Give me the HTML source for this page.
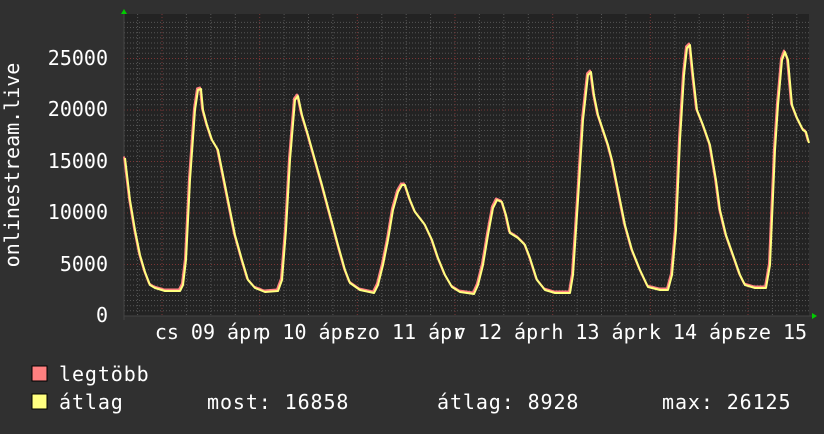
<!DOCTYPE html>
<html><head><meta charset="utf-8"><style>
body{margin:0;width:824px;height:430px;background:#303030;overflow:hidden;font-family:"DejaVu Sans Mono","Liberation Mono",monospace;}
svg text{font-family:"DejaVu Sans Mono","Liberation Mono",monospace;fill:#fff;font-size:20px;}
.lg{letter-spacing:0.9px}
</style></head><body>
<svg width="824" height="430" viewBox="0 0 824 430" xmlns="http://www.w3.org/2000/svg">
<defs><clipPath id="c"><rect x="0" y="320" width="811" height="30"/></clipPath></defs>
<rect x="0" y="0" width="824" height="430" fill="#303030"/>
<rect x="124" y="14" width="685" height="302" fill="#232323"/>
<g stroke="#555" stroke-width="1" stroke-dasharray="1,2">
<line x1="124" y1="310.8" x2="809" y2="310.8"/><line x1="124" y1="305.7" x2="809" y2="305.7"/><line x1="124" y1="300.5" x2="809" y2="300.5"/><line x1="124" y1="295.4" x2="809" y2="295.4"/><line x1="124" y1="290.2" x2="809" y2="290.2"/><line x1="124" y1="285.1" x2="809" y2="285.1"/><line x1="124" y1="279.9" x2="809" y2="279.9"/><line x1="124" y1="274.8" x2="809" y2="274.8"/><line x1="124" y1="269.6" x2="809" y2="269.6"/>
<line x1="124" y1="259.3" x2="809" y2="259.3"/><line x1="124" y1="254.1" x2="809" y2="254.1"/><line x1="124" y1="249" x2="809" y2="249"/><line x1="124" y1="243.8" x2="809" y2="243.8"/><line x1="124" y1="238.7" x2="809" y2="238.7"/><line x1="124" y1="233.5" x2="809" y2="233.5"/><line x1="124" y1="228.4" x2="809" y2="228.4"/><line x1="124" y1="223.2" x2="809" y2="223.2"/><line x1="124" y1="218.1" x2="809" y2="218.1"/>
<line x1="124" y1="207.8" x2="809" y2="207.8"/><line x1="124" y1="202.6" x2="809" y2="202.6"/><line x1="124" y1="197.5" x2="809" y2="197.5"/><line x1="124" y1="192.3" x2="809" y2="192.3"/><line x1="124" y1="187.2" x2="809" y2="187.2"/><line x1="124" y1="182" x2="809" y2="182"/><line x1="124" y1="176.9" x2="809" y2="176.9"/><line x1="124" y1="171.7" x2="809" y2="171.7"/><line x1="124" y1="166.6" x2="809" y2="166.6"/>
<line x1="124" y1="156.3" x2="809" y2="156.3"/><line x1="124" y1="151.1" x2="809" y2="151.1"/><line x1="124" y1="146" x2="809" y2="146"/><line x1="124" y1="140.8" x2="809" y2="140.8"/><line x1="124" y1="135.7" x2="809" y2="135.7"/><line x1="124" y1="130.5" x2="809" y2="130.5"/><line x1="124" y1="125.4" x2="809" y2="125.4"/><line x1="124" y1="120.2" x2="809" y2="120.2"/><line x1="124" y1="115.1" x2="809" y2="115.1"/>
<line x1="124" y1="104.8" x2="809" y2="104.8"/><line x1="124" y1="99.6" x2="809" y2="99.6"/><line x1="124" y1="94.5" x2="809" y2="94.5"/><line x1="124" y1="89.3" x2="809" y2="89.3"/><line x1="124" y1="84.2" x2="809" y2="84.2"/><line x1="124" y1="79" x2="809" y2="79"/><line x1="124" y1="73.9" x2="809" y2="73.9"/><line x1="124" y1="68.7" x2="809" y2="68.7"/><line x1="124" y1="63.6" x2="809" y2="63.6"/>
<line x1="124" y1="53.3" x2="809" y2="53.3"/><line x1="124" y1="48.1" x2="809" y2="48.1"/><line x1="124" y1="43" x2="809" y2="43"/><line x1="124" y1="37.8" x2="809" y2="37.8"/><line x1="124" y1="32.7" x2="809" y2="32.7"/><line x1="124" y1="27.5" x2="809" y2="27.5"/><line x1="124" y1="22.4" x2="809" y2="22.4"/>
<line x1="137.6" y1="14" x2="137.6" y2="316"/><line x1="186.4" y1="14" x2="186.4" y2="316"/><line x1="210.8" y1="14" x2="210.8" y2="316"/><line x1="235.3" y1="14" x2="235.3" y2="316"/><line x1="284.1" y1="14" x2="284.1" y2="316"/><line x1="308.5" y1="14" x2="308.5" y2="316"/><line x1="332.9" y1="14" x2="332.9" y2="316"/><line x1="381.8" y1="14" x2="381.8" y2="316"/><line x1="406.2" y1="14" x2="406.2" y2="316"/><line x1="430.6" y1="14" x2="430.6" y2="316"/><line x1="479.4" y1="14" x2="479.4" y2="316"/><line x1="503.8" y1="14" x2="503.8" y2="316"/><line x1="528.3" y1="14" x2="528.3" y2="316"/><line x1="577.1" y1="14" x2="577.1" y2="316"/><line x1="601.5" y1="14" x2="601.5" y2="316"/><line x1="625.9" y1="14" x2="625.9" y2="316"/><line x1="674.8" y1="14" x2="674.8" y2="316"/><line x1="699.2" y1="14" x2="699.2" y2="316"/><line x1="723.6" y1="14" x2="723.6" y2="316"/><line x1="772.4" y1="14" x2="772.4" y2="316"/><line x1="796.8" y1="14" x2="796.8" y2="316"/>
</g>
<g stroke="#7a3535" stroke-width="1" stroke-dasharray="1,2">
<line x1="124" y1="264.5" x2="809" y2="264.5"/><line x1="124" y1="213" x2="809" y2="213"/><line x1="124" y1="161.5" x2="809" y2="161.5"/><line x1="124" y1="110" x2="809" y2="110"/><line x1="124" y1="58.5" x2="809" y2="58.5"/>
<line x1="162" y1="14" x2="162" y2="316"/><line x1="259.7" y1="14" x2="259.7" y2="316"/><line x1="357.3" y1="14" x2="357.3" y2="316"/><line x1="455" y1="14" x2="455" y2="316"/><line x1="552.7" y1="14" x2="552.7" y2="316"/><line x1="650.3" y1="14" x2="650.3" y2="316"/><line x1="748" y1="14" x2="748" y2="316"/>
</g>
<line x1="124" y1="316" x2="813" y2="316" stroke="#444" stroke-width="1"/>
<line x1="124" y1="320" x2="124" y2="12" stroke="#444" stroke-width="1"/>
<polygon points="121,14 127,14 124,9" fill="#00cc00"/>
<polygon points="812,313 812,319 817,316" fill="#00cc00"/>
<g fill="none" stroke-width="2" stroke-linejoin="round">
<polyline stroke="#ff8080" transform="translate(-1,-1.5)" points="125,158 130,200 135,230 140,255 145,272 150,285 155,288 165,291 180,291 183,285 186,260 190,180 195,110 198,90 201,89 203,110 207,125 212,140 218,150 222,170 228,200 235,235 242,260 248,280 255,288 265,292 278,291 282,280 286,230 290,160 295,100 298,96 302,115 308,135 315,160 322,185 330,215 338,245 345,270 350,283 360,290 374,293 378,285 383,265 388,240 393,210 398,192 402,185 405,185 410,200 415,212 425,225 432,240 438,258 445,275 452,287 460,292 474,294 478,285 483,265 488,235 493,208 497,200 502,202 506,215 510,233 518,238 525,245 530,258 537,280 545,290 555,293 570,293 573,275 578,200 583,120 588,75 591,72 594,95 598,115 603,130 608,145 612,160 618,190 625,225 632,250 640,270 648,287 660,290 668,290 672,275 676,230 680,140 684,75 687,48 690,45 693,75 697,110 703,125 710,145 716,180 720,210 726,235 733,255 740,275 745,285 755,288 766,288 770,265 775,150 778,105 782,60 785,52 788,60 792,105 797,118 803,130 806,132 809,143"/>
<polyline stroke="#ffff80" points="125,158 130,200 135,230 140,255 145,272 150,285 155,288 165,291 180,291 183,285 186,260 190,180 195,110 198,90 201,89 203,110 207,125 212,140 218,150 222,170 228,200 235,235 242,260 248,280 255,288 265,292 278,291 282,280 286,230 290,160 295,100 298,96 302,115 308,135 315,160 322,185 330,215 338,245 345,270 350,283 360,290 374,293 378,285 383,265 388,240 393,210 398,192 402,185 405,185 410,200 415,212 425,225 432,240 438,258 445,275 452,287 460,292 474,294 478,285 483,265 488,235 493,208 497,200 502,202 506,215 510,233 518,238 525,245 530,258 537,280 545,290 555,293 570,293 573,275 578,200 583,120 588,75 591,72 594,95 598,115 603,130 608,145 612,160 618,190 625,225 632,250 640,270 648,287 660,290 668,290 672,275 676,230 680,140 684,75 687,48 690,45 693,75 697,110 703,125 710,145 716,180 720,210 726,235 733,255 740,275 745,285 755,288 766,288 770,265 775,150 778,105 782,60 785,52 788,60 792,105 797,118 803,130 806,132 809,143"/>
</g>
<g text-anchor="end">
<text x="108" y="65">25000</text><text x="108" y="116">20000</text><text x="108" y="168">15000</text><text x="108" y="219">10000</text><text x="108" y="271">5000</text><text x="108" y="322">0</text>
</g>
<text transform="translate(19,165) rotate(-90)" text-anchor="middle">onlinestream.live</text>
<g text-anchor="middle" clip-path="url(#c)">
<text x="209" y="339">cs 09 ápr</text><text x="306.5" y="339">p 10 ápr</text><text x="404" y="339">szo 11 ápr</text><text x="502" y="339">v 12 ápr</text><text x="599.5" y="339">h 13 ápr</text><text x="697" y="339">k 14 ápr</text><text x="795" y="339">sze 15 ápr</text>
</g>
<rect x="32" y="366" width="15" height="15" fill="#ff8080" stroke="#000" stroke-width="1"/>
<rect x="32" y="394" width="15" height="15" fill="#ffff80" stroke="#000" stroke-width="1"/>
<text class="lg" x="59" y="381">legtöbb</text>
<text class="lg" x="59" y="409">átlag</text>
<text class="lg" x="207" y="409">most: 16858</text>
<text class="lg" x="437" y="409">átlag: 8928</text>
<text class="lg" x="662" y="409">max: 26125</text>
</svg>
</body></html>
